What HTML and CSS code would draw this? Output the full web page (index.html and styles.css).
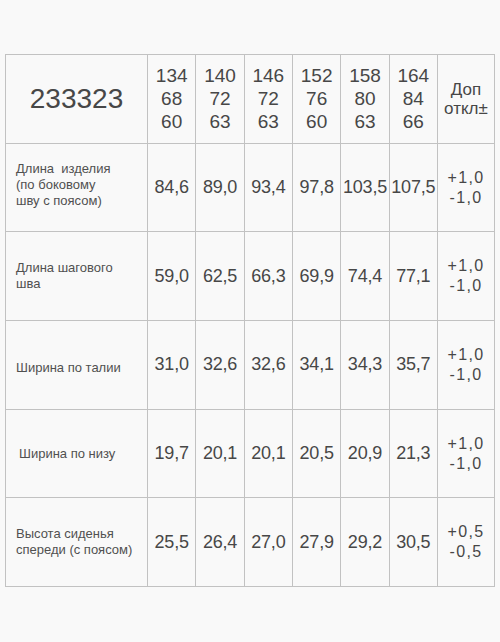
FILE: index.html
```html
<!DOCTYPE html>
<html lang="ru">
<head>
<meta charset="utf-8">
<link rel="stylesheet" href="styles.css">
</head>
<body>
<table class="sizes">
  <colgroup>
    <col class="c-label">
    <col class="c-val"><col class="c-val"><col class="c-val">
    <col class="c-val"><col class="c-val"><col class="c-val">
    <col class="c-tol">
  </colgroup>
  <tr class="head">
    <td class="model">233323</td>
    <td class="size">134<br>68<br>60</td>
    <td class="size">140<br>72<br>63</td>
    <td class="size">146<br>72<br>63</td>
    <td class="size">152<br>76<br>60</td>
    <td class="size">158<br>80<br>63</td>
    <td class="size">164<br>84<br>66</td>
    <td class="tolhead">Доп<br>откл±</td>
  </tr>
  <tr>
    <td class="label"><div class="shift-up">Длина&nbsp; изделия<br>(по боковому<br>шву с поясом)</div></td>
    <td class="val">84,6</td><td class="val">89,0</td><td class="val">93,4</td>
    <td class="val">97,8</td><td class="val">103,5</td><td class="val">107,5</td>
    <td class="tol">+1,0<br>-1,0</td>
  </tr>
  <tr>
    <td class="label">Длина шагового<br>шва</td>
    <td class="val">59,0</td><td class="val">62,5</td><td class="val">66,3</td>
    <td class="val">69,9</td><td class="val">74,4</td><td class="val">77,1</td>
    <td class="tol">+1,0<br>-1,0</td>
  </tr>
  <tr>
    <td class="label"><div class="shift-down">Ширина по талии</div></td>
    <td class="val">31,0</td><td class="val">32,6</td><td class="val">32,6</td>
    <td class="val">34,1</td><td class="val">34,3</td><td class="val">35,7</td>
    <td class="tol">+1,0<br>-1,0</td>
  </tr>
  <tr>
    <td class="label l-indent">Ширина по низу</td>
    <td class="val">19,7</td><td class="val">20,1</td><td class="val">20,1</td>
    <td class="val">20,5</td><td class="val">20,9</td><td class="val">21,3</td>
    <td class="tol">+1,0<br>-1,0</td>
  </tr>
  <tr>
    <td class="label">Высота сиденья<br>спереди (с поясом)</td>
    <td class="val">25,5</td><td class="val">26,4</td><td class="val">27,0</td>
    <td class="val">27,9</td><td class="val">29,2</td><td class="val">30,5</td>
    <td class="tol">+0,5<br>-0,5</td>
  </tr>
</table>
</body>
</html>
```
FILE: styles.css
```css
html, body {
  margin: 0;
  padding: 0;
  background: #f9f9f9;
}
body {
  padding: 54px 0 0 5px;
  font-family: "Liberation Sans", Arial, sans-serif;
  color: #474747;
}
.sizes {
  border-collapse: collapse;
  table-layout: fixed;
  width: 489px;
}
.c-label { width: 142px; }
.c-val { width: 48.33px; }
.c-tol { width: 57px; }
.sizes td {
  border: 1px solid #c2c2c2;
  padding: 0;
  height: 87.7px;
  text-align: center;
  vertical-align: middle;
  white-space: nowrap;
}
.model {
  font-size: 28px;
}
.size {
  font-size: 19px;
  line-height: 23px;
}
.tolhead {
  font-size: 17px;
  line-height: 19px;
}
.sizes .label {
  text-align: left;
  padding-left: 10px;
  font-size: 13px;
  line-height: 16px;
  color: #505050;
}
.shift-up { margin-bottom: 6px; }
.shift-down { margin-top: 6px; }
.sizes .l-indent { padding-left: 13px; }
.val {
  font-size: 18px;
  letter-spacing: -0.2px;
}
.tol {
  font-size: 16px;
  line-height: 20px;
  letter-spacing: 1.3px;
}
```
